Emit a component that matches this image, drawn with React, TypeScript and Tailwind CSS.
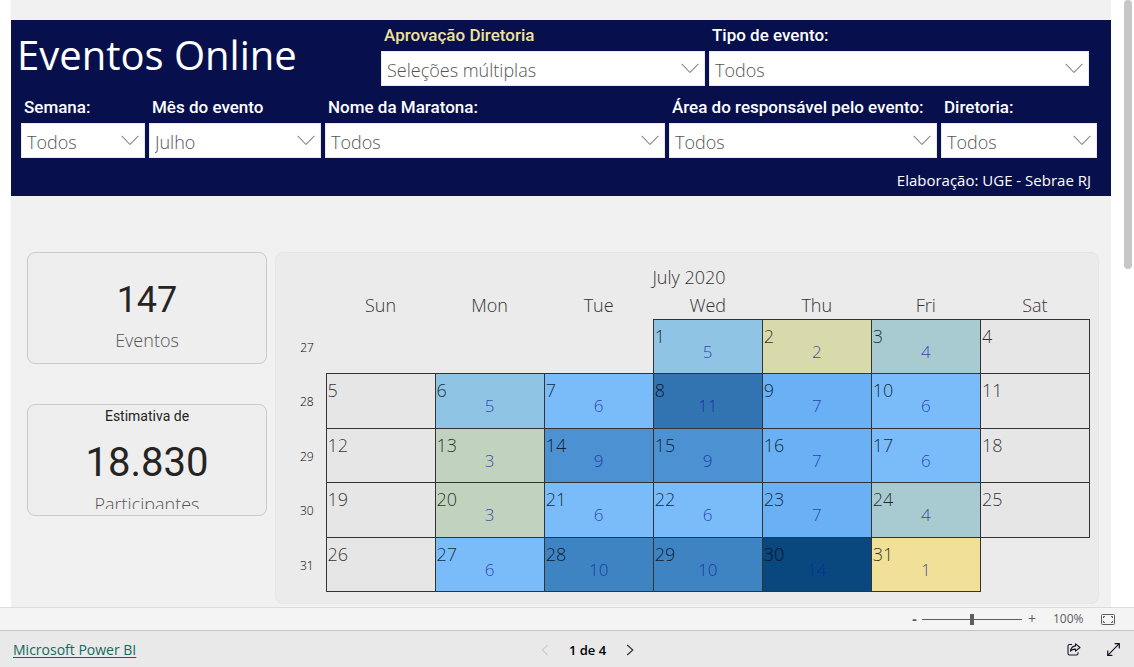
import { useId, useState, type ReactNode } from "react";
import clsx from "clsx";

const WEEKDAYS = ["Sun", "Mon", "Tue", "Wed", "Thu", "Fri", "Sat"];

type Day = { day: number; count?: number } | null;

const WEEKS: { week: number; days: Day[] }[] = [
    { week: 27, days: [null, null, null, { day: 1, count: 5 }, { day: 2, count: 2 }, { day: 3, count: 4 }, { day: 4 }] },
    { week: 28, days: [{ day: 5 }, { day: 6, count: 5 }, { day: 7, count: 6 }, { day: 8, count: 11 }, { day: 9, count: 7 }, { day: 10, count: 6 }, { day: 11 }] },
    { week: 29, days: [{ day: 12 }, { day: 13, count: 3 }, { day: 14, count: 9 }, { day: 15, count: 9 }, { day: 16, count: 7 }, { day: 17, count: 6 }, { day: 18 }] },
    { week: 30, days: [{ day: 19 }, { day: 20, count: 3 }, { day: 21, count: 6 }, { day: 22, count: 6 }, { day: 23, count: 7 }, { day: 24, count: 4 }, { day: 25 }] },
    { week: 31, days: [{ day: 26 }, { day: 27, count: 6 }, { day: 28, count: 10 }, { day: 29, count: 10 }, { day: 30, count: 14 }, { day: 31, count: 1 }, null] },
];

const HEAT: Record<number, string> = {
    1: "bg-[#f0e098]",
    2: "bg-[#d8daac]",
    3: "bg-[#c1d3be]",
    4: "bg-[#a8cbd1]",
    5: "bg-[#8fc4e5]",
    6: "bg-[#79bcf9]",
    7: "bg-[#69b0f5]",
    9: "bg-[#4c92d3]",
    10: "bg-[#3e84c2]",
    11: "bg-[#3274b2]",
    14: "bg-[#09477f]",
};

function Slicer({ label, value, highlight }: { label: string; value: string; highlight?: boolean }) {
    const id = useId();
    return (
        <div className="min-w-0">
            <label
                htmlFor={id}
                className={clsx(
                    "block whitespace-nowrap pb-2 pl-[3px] font-['Roboto',sans-serif] text-[17px] leading-4 font-medium",
                    highlight ? "text-[#f0e199]" : "text-white"
                )}
            >
                {label}
            </label>
            <div className="relative">
                <select
                    id={id}
                    className="block h-[35px] w-full appearance-none border border-[#eaeaea] bg-white pt-[3px] pr-8 pl-[5px] text-lg leading-7 font-[350] text-[#555]"
                >
                    <option>{value}</option>
                </select>
                <svg className="pointer-events-none absolute top-3 right-[6px]" width="18" height="11" viewBox="0 0 18 11" fill="none" stroke="#555" strokeWidth="1">
                    <path d="M0.5 0.8L9 9.5L17.5 0.8" />
                </svg>
            </div>
        </div>
    );
}

function Header() {
    return (
        <header className="bg-[#07104d] pr-[14px] pl-[10px]">
            <div className="grid grid-cols-[356fr_324fr_380fr] gap-x-1 pt-[7px] pr-2">
                <h1 className="-ml-1 pt-[3px] text-[40px] leading-[50px] font-[370] whitespace-nowrap text-white">Eventos Online</h1>
                <Slicer label="Aprovação Diretoria" value="Seleções múltiplas" highlight />
                <Slicer label="Tipo de evento:" value="Todos" />
            </div>
            <div className="grid grid-cols-[124fr_172fr_340fr_268fr_156fr] gap-x-1 pt-[13px]">
                <Slicer label="Semana:" value="Todos" />
                <Slicer label="Mês do evento" value="Julho" />
                <Slicer label="Nome da Maratona:" value="Todos" />
                <Slicer label="Área do responsável pelo evento:" value="Todos" />
                <Slicer label="Diretoria:" value="Todos" />
            </div>
            <p className="pt-3 pr-[6px] pb-[6px] text-right text-[15px] leading-5 text-white">Elaboração: UGE - Sebrae RJ</p>
        </header>
    );
}

function Card({ children }: { children: ReactNode }) {
    return (
        <section className="flex h-28 flex-col items-center overflow-hidden rounded-lg border border-[#c9c9c9] bg-[#eeeeee] pb-[6px]">
            {children}
        </section>
    );
}

function Calendar() {
    return (
        <section className="min-w-0 flex-1 rounded-lg border border-[#e5e5e5] bg-[#ebebeb] pt-[11px] pr-2 pb-[11px]">
            <table className="w-full table-fixed border-collapse text-lg font-light text-[#333]">
                <caption className="h-[26px] pl-3 leading-[26px]">July 2020</caption>
                <thead>
                    <tr className="h-[29px]">
                        <td className="w-[50px]" />
                        {WEEKDAYS.map((d) => (
                            <th key={d} scope="col" className="p-0 pt-[2px] align-top leading-[26px] font-light">{d}</th>
                        ))}
                    </tr>
                </thead>
                <tbody>
                    {WEEKS.map(({ week, days }, row) => (
                        <tr key={week} className={row % 2 ? "h-[55px]" : "h-[54px]"}>
                            <th scope="row" className="p-0 pt-[3px] pl-3 text-xs font-light text-black">{week}</th>
                            {days.map((d, i) =>
                                d ? (
                                    <td
                                        key={i}
                                        className={clsx(
                                            "border border-[#333] p-0 pt-2 align-top",
                                            d.count ? HEAT[d.count] : "bg-[#e6e6e6]"
                                        )}
                                    >
                                        <div className="pl-px leading-4 text-black/80">{d.day}</div>
                                        {d.count && <div className="text-center text-[17px] leading-4 text-[#12239e]/80">{d.count}</div>}
                                    </td>
                                ) : (
                                    <td key={i} />
                                )
                            )}
                        </tr>
                    ))}
                </tbody>
            </table>
        </section>
    );
}

function ZoomBar() {
    const [zoom, setZoom] = useState(100);
    return (
        <div className="flex h-[23px] shrink-0 items-center justify-end border-t border-[#dcdcdc] bg-[#f4f4f4] pr-[19px] text-[#605e5c]">
            <button aria-label="Reduzir" className="w-[15px] text-sm leading-4 font-bold" onClick={() => setZoom(zoom - 10)}>-</button>
            <input
                type="range"
                aria-label="Zoom"
                min={0}
                max={200}
                value={zoom}
                onChange={(e) => setZoom(Number(e.target.value))}
                className="h-[11px] w-[100px] appearance-none bg-[linear-gradient(#605e5c,#605e5c)] bg-[length:100%_1px] bg-center bg-no-repeat [&::-webkit-slider-thumb]:h-[11px] [&::-webkit-slider-thumb]:w-1 [&::-webkit-slider-thumb]:appearance-none [&::-webkit-slider-thumb]:bg-[#605e5c]"
            />
            <button aria-label="Ampliar" className="w-5 text-sm leading-4" onClick={() => setZoom(zoom + 10)}>+</button>
            <span className="w-[59px] pl-[11px] text-xs leading-4">{zoom}%</span>
            <button aria-label="Ajustar à página" onClick={() => setZoom(100)}>
                <svg width="14" height="11" viewBox="0 0 14 11" fill="none" stroke="#605e5c">
                    <rect x="0.5" y="0.5" width="13" height="10" rx="1" />
                    <path d="M2.5 4V2.5H4M10 2.5H11.5V4M11.5 7V8.5H10M4 8.5H2.5V7" />
                </svg>
            </button>
        </div>
    );
}

function Footer() {
    return (
        <footer className="grid h-[37px] shrink-0 grid-cols-[1fr_auto_1fr] items-center border-t border-[#c4c4c4] bg-[#e9e9e9] pt-px pr-[14px] pl-[13px]">
            <a href="#" className="justify-self-start text-sm leading-5 text-[#11695c] underline underline-offset-2">Microsoft Power BI</a>
            <nav className="flex items-center gap-5 pl-[42px]">
                <button aria-label="Página anterior" disabled>
                    <svg width="8" height="12" viewBox="0 0 8 12" fill="none" stroke="#bdbdbd">
                        <path d="M6.8 1L1.2 6L6.8 11" />
                    </svg>
                </button>
                <span className="text-[13px] leading-5 font-semibold text-black">1 de 4</span>
                <button aria-label="Próxima página">
                    <svg width="8" height="12" viewBox="0 0 8 12" fill="none" stroke="#333" strokeWidth="1.2">
                        <path d="M1.2 1L6.8 6L1.2 11" />
                    </svg>
                </button>
            </nav>
            <div className="flex items-center gap-[26px] justify-self-end">
                <button aria-label="Compartilhar">
                    <svg width="14" height="13" viewBox="0 0 14 13" fill="none" stroke="#1a1023" strokeWidth="1.1" strokeLinejoin="round">
                        <path d="M5 1.5H2.6Q1 1.5 1 3.1V10.4Q1 12 2.6 12H9.4Q11 12 11 10.4V9.2" />
                        <path d="M8.5 0.8L13 4.5L8.5 8.2V6.1C6.2 6 4.6 6.6 3.4 8.2C3.8 5.2 5.5 3.2 8.5 2.9Z" />
                    </svg>
                </button>
                <button aria-label="Tela cheia">
                    <svg width="13" height="13" viewBox="0 0 13 13" fill="none" stroke="#1a1023" strokeWidth="1.2">
                        <path d="M7.6 0.7H12.3V5.4M12.3 0.7L0.7 12.3M0.7 7.6V12.3H5.4" />
                    </svg>
                </button>
            </div>
        </footer>
    );
}

export default function App() {
    return (
        <div className="flex h-screen flex-col bg-white font-['Open_Sans','Noto_Sans',sans-serif]">
            <div className="flex min-h-0 flex-1 overflow-hidden">
                <main className="ml-[11px] min-w-0 flex-1 bg-[#f1f1f1] pt-5">
                    <Header />
                    <div className="flex items-start gap-2 pt-14 pr-3 pl-4">
                        <div className="flex w-60 shrink-0 flex-col gap-10">
                            <Card>
                                <div className="pt-6 font-['Roboto',sans-serif] text-4xl leading-[46px] font-[450] text-[#252423]">147</div>
                                <div className="pt-px text-lg leading-8 font-[350] text-[#555]">Eventos</div>
                            </Card>
                            <Card>
                                <h2 className="pt-[3px] font-['Roboto',sans-serif] text-sm leading-4 text-[#252423]">Estimativa de</h2>
                                <div className="pt-[14px] font-['Roboto',sans-serif] text-[40px] leading-[50px] font-[450] text-[#252423]">18.830</div>
                                {/* the caption runs past the card and is clipped by it */}
                                <div className="min-h-0 overflow-hidden text-lg leading-8 font-[350] text-[#555]">Participantes</div>
                            </Card>
                        </div>
                        <Calendar />
                    </div>
                </main>
                <div className="w-[23px] shrink-0 pl-[13px]">
                    <div className="h-[269px] w-2 rounded-full bg-[#c6c6c6]" />
                </div>
            </div>
            <ZoomBar />
            <Footer />
        </div>
    );
}
